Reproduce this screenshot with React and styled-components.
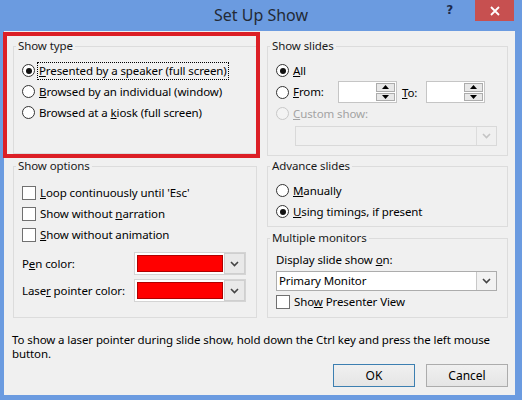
import React from 'react'
import styled, { createGlobalStyle } from 'styled-components'

const GlobalStyle = createGlobalStyle`
    html, body {
        margin: 0;
        padding: 0;
        background: #6b9be0;
    }
    body {
        font-family: "Noto Sans", "Open Sans", sans-serif;
        font-size: 11.5px;
        letter-spacing: -0.1px;
        color: #000;
    }
`

function Radio({ checked, disabled, focused, children }) {
    return (
        <OptionRow>
            <RadioDot checked={checked} disabled={disabled} />
            <OptionLabel focused={focused} disabled={disabled}>{children}</OptionLabel>
        </OptionRow>
    )
}

function Check({ children }) {
    return (
        <OptionRow>
            <CheckBox />
            <OptionLabel>{children}</OptionLabel>
        </OptionRow>
    )
}

function Chevron({ color }) {
    return (
        <svg width="9" height="6" viewBox="0 0 9 6">
            <path d="M1 1 L4.5 4.5 L8 1" fill="none" stroke={color} strokeWidth="1.6" />
        </svg>
    )
}

function SpinBox() {
    return (
        <Spin>
            <SpinField />
            <SpinButtons>
                <SpinButton>
                    <svg width="7" height="4" viewBox="0 0 7 4"><path d="M0 4 L3.5 0 L7 4 Z" fill="#000" /></svg>
                </SpinButton>
                <SpinButton>
                    <svg width="7" height="4" viewBox="0 0 7 4"><path d="M0 0 L3.5 4 L7 0 Z" fill="#000" /></svg>
                </SpinButton>
            </SpinButtons>
        </Spin>
    )
}

function ColorPicker() {
    return (
        <ColorBox>
            <Swatch />
            <DropButton>
                <Chevron color="#444" />
            </DropButton>
        </ColorBox>
    )
}

function App() {
    return (
        <Window>
            <GlobalStyle />
            <TitleBar>
                <span />
                <Title>Set Up Show</Title>
                <Controls>
                    <Help>?</Help>
                    <Close>
                        <svg width="10" height="10" viewBox="0 0 10 10">
                            <path d="M1 1 L9 9 M9 1 L1 9" stroke="#fff" strokeWidth="1.8" />
                        </svg>
                    </Close>
                </Controls>
            </TitleBar>
            <Body>
                <Columns>
                    <Column>
                        <Group height={116}>
                            <Legend>Show type</Legend>
                            <Options top={6}>
                                <Radio checked focused><u>P</u>resented by a speaker (full screen)</Radio>
                                <Radio><u>B</u>rowsed by an individual (window)</Radio>
                                <Radio>Browsed at a <u>k</u>iosk (full screen)</Radio>
                            </Options>
                        </Group>
                        <Group height={160} gap={4}>
                            <Legend>Show options</Legend>
                            <Options top={8}>
                                <Check><u>L</u>oop continuously until 'Esc'</Check>
                                <Check>Show without <u>n</u>arration</Check>
                                <Check><u>S</u>how without animation</Check>
                            </Options>
                            <ColorRows>
                                <ColorRow>
                                    <FieldLabel>P<u>e</u>n color:</FieldLabel>
                                    <ColorPicker />
                                </ColorRow>
                                <ColorRow>
                                    <FieldLabel>Lase<u>r</u> pointer color:</FieldLabel>
                                    <ColorPicker />
                                </ColorRow>
                            </ColorRows>
                        </Group>
                    </Column>
                    <Column>
                        <Group height={118}>
                            <Legend>Show slides</Legend>
                            <Options top={6}>
                                <Radio checked><u>A</u>ll</Radio>
                                <RangeRow>
                                    <Radio><u>F</u>rom:</Radio>
                                    <SpinBox />
                                    <ToLabel><u>T</u>o:</ToLabel>
                                    <SpinBox />
                                </RangeRow>
                                <Radio disabled><u>C</u>ustom show:</Radio>
                                <Select disabled indent={19} width={202}>
                                    <SelectText />
                                    <SelectButton disabled>
                                        <Chevron color="#c4c4c4" />
                                    </SelectButton>
                                </Select>
                            </Options>
                        </Group>
                        <Group height={69} gap={2}>
                            <Legend>Advance slides</Legend>
                            <Options top={6}>
                                <Radio><u>M</u>anually</Radio>
                                <Radio checked><u>U</u>sing timings, if present</Radio>
                            </Options>
                        </Group>
                        <Group height={88} gap={3}>
                            <Legend>Multiple monitors</Legend>
                            <Options top={5}>
                                <FieldLabel>Display slide show <u>o</u>n:</FieldLabel>
                                <Select width={221}>
                                    <SelectText>Primary Monitor</SelectText>
                                    <SelectButton>
                                        <Chevron color="#444" />
                                    </SelectButton>
                                </Select>
                                <Check>Sho<u>w</u> Presenter View</Check>
                            </Options>
                        </Group>
                    </Column>
                </Columns>
                <Hint>To show a laser pointer during slide show, hold down the Ctrl key and press the left mouse button.</Hint>
                <Buttons>
                    <Button primary>OK</Button>
                    <Button>Cancel</Button>
                </Buttons>
            </Body>
            <Highlight />
        </Window>
    )
}

export default App

const Window = styled.div`
    position: relative;
    width: 522px;
    height: 400px;
    display: flex;
    flex-direction: column;
    background: #6b9be0;
    overflow: hidden;
`
const TitleBar = styled.div`
    height: 31px;
    display: grid;
    grid-template-columns: 1fr auto 1fr;
    align-items: start;
`
const Title = styled.div`
    font-size: 16px;
    letter-spacing: 0;
    line-height: 31px;
    color: #232a35;
`
const Controls = styled.div`
    display: flex;
    justify-content: flex-end;
    align-items: flex-start;
    padding-right: 8px;
`
const Help = styled.div`
    font-family: "DejaVu Sans", sans-serif;
    font-weight: bold;
    font-size: 12px;
    line-height: 21px;
    color: #1d2b4c;
    margin-right: 22px;
`
const Close = styled.div`
    width: 39px;
    height: 21px;
    background: #c75050;
    display: flex;
    align-items: center;
    justify-content: center;
`
const Body = styled.div`
    flex: 1;
    margin: 0 7px 5px 4px;
    background: #f0f0f0;
    padding: 7px 7px 8px 9px;
    display: flex;
    flex-direction: column;
`
const Columns = styled.div`
    display: grid;
    grid-template-columns: 244px 1fr;
    column-gap: 10px;
`
const Column = styled.div`
    display: flex;
    flex-direction: column;
`
const Group = styled.fieldset`
    box-sizing: border-box;
    height: ${p => p.height}px;
    margin: ${p => p.gap || 0}px 0 0 0;
    padding: 0 8px;
    min-width: 0;
    border: 1px solid #dcdcdc;
`
const Legend = styled.legend`
    margin-left: -6px;
    padding: 0 2px;
    line-height: 16px;
    color: #1a1a1a;
`
const Options = styled.div`
    display: flex;
    flex-direction: column;
    margin-top: ${p => p.top}px;
`
const OptionRow = styled.div`
    height: 21px;
    display: flex;
    align-items: center;
    gap: 4px;
    white-space: nowrap;
`
const RadioDot = styled.span`
    box-sizing: border-box;
    width: 13px;
    height: 13px;
    border-radius: 50%;
    border: 1px solid ${p => (p.disabled ? '#c8c8c8' : '#333')};
    background: ${p => (p.disabled ? '#f3f3f3' : '#fff')};
    display: flex;
    align-items: center;
    justify-content: center;
    flex-shrink: 0;

    &::after {
        content: '';
        width: 6px;
        height: 6px;
        border-radius: 50%;
        background: #111;
        display: ${p => (p.checked ? 'block' : 'none')};
    }
`
const OptionLabel = styled.span`
    color: ${p => (p.disabled ? '#a3a3a3' : '#000')};
    outline: ${p => (p.focused ? '1px dotted #000' : 'none')};
    line-height: 16px;
    padding: 0 1px;
    margin-left: -1px;
`
const CheckBox = styled.span`
    box-sizing: border-box;
    width: 14px;
    height: 14px;
    border: 1px solid #707070;
    background: #fff;
    flex-shrink: 0;
`
const ColorRows = styled.div`
    display: flex;
    flex-direction: column;
    gap: 4px;
    margin-top: 7px;
`
const ColorRow = styled.div`
    display: grid;
    grid-template-columns: 112px 112px;
    align-items: center;
`
const FieldLabel = styled.div`
    line-height: 18px;
    white-space: nowrap;
`
const ColorBox = styled.div`
    box-sizing: border-box;
    height: 23px;
    display: flex;
    border: 1px solid #d4d4d4;
    background: #fff;
    padding: 2px 1px 2px 2px;
    gap: 1px;
`
const Swatch = styled.div`
    flex: 1;
    background: #ff0000;
    border: 1px solid #b00000;
`
const DropButton = styled.div`
    width: 19px;
    display: flex;
    align-items: center;
    justify-content: center;
    background: #e9e9e9;
    border: 1px solid #cfcfcf;
    margin: -2px -1px -2px 0;
`
const RangeRow = styled.div`
    height: 22px;
    display: flex;
    align-items: center;

    & > ${OptionRow} {
        width: 62px;
    }
`
const Spin = styled.div`
    box-sizing: border-box;
    width: 59px;
    height: 22px;
    display: flex;
    border: 1px solid #c5c5c5;
    background: #fff;
`
const SpinField = styled.div`
    flex: 1;
`
const SpinButtons = styled.div`
    width: 19px;
    display: flex;
    flex-direction: column;
    gap: 1px;
    padding: 1px 1px 1px 0;
`
const SpinButton = styled.div`
    flex: 1;
    display: flex;
    align-items: center;
    justify-content: center;
    background: #e8e8e8;
    border: 1px solid #acacac;
`
const ToLabel = styled.span`
    margin: 0 9px 0 5px;
`
const Select = styled.div`
    box-sizing: border-box;
    width: ${p => p.width}px;
    height: 20px;
    margin: 2px 0 0 ${p => p.indent || 0}px;
    display: flex;
    border: 1px solid ${p => (p.disabled ? '#d9d9d9' : '#acacac')};
    background: ${p => (p.disabled ? '#f0f0f0' : '#fff')};
`
const SelectText = styled.div`
    flex: 1;
    padding-left: 2px;
    line-height: 18px;
`
const SelectButton = styled.div`
    width: 19px;
    display: flex;
    align-items: center;
    justify-content: center;
    border-left: 1px solid ${p => (p.disabled ? '#dcdcdc' : '#c8c8c8')};
    background: ${p => (p.disabled ? '#f0f0f0' : '#f2f2f2')};
`
const Hint = styled.p`
    margin: 15px 0 0 -1px;
    line-height: 14px;
`
const Buttons = styled.div`
    margin-top: auto;
    display: flex;
    justify-content: flex-end;
    gap: 11px;
`
const Button = styled.button`
    box-sizing: border-box;
    width: 82px;
    height: 23px;
    font-family: inherit;
    font-size: 12px;
    color: #000;
    background: linear-gradient(#f0f0f0, #e5e5e5);
    border: 1px solid ${p => (p.primary ? '#3c7fb1' : '#acacac')};
    padding: 0;
`
const Highlight = styled.div`
    position: absolute;
    left: 3px;
    top: 32px;
    width: 257px;
    height: 126px;
    box-sizing: border-box;
    border: 4px solid #dc1f26;
    pointer-events: none;
`
